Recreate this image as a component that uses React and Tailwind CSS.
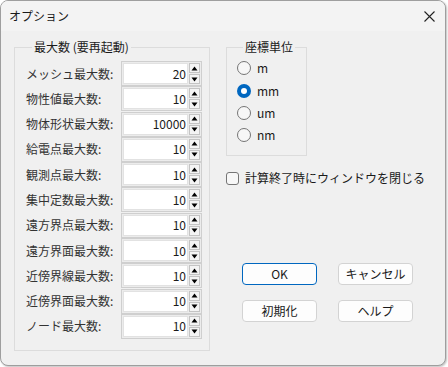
import { useState } from 'react'

const limits = [
  { label: 'メッシュ最大数:', value: '20' },
  { label: '物性値最大数:', value: '10' },
  { label: '物体形状最大数:', value: '10000' },
  { label: '給電点最大数:', value: '10' },
  { label: '観測点最大数:', value: '10' },
  { label: '集中定数最大数:', value: '10' },
  { label: '遠方界点最大数:', value: '10' },
  { label: '遠方界面最大数:', value: '10' },
  { label: '近傍界線最大数:', value: '10' },
  { label: '近傍界面最大数:', value: '10' },
  { label: 'ノード最大数:', value: '10' },
]

const units = ['m', 'mm', 'um', 'nm']

const Spin = ({ value }) => (
  <div className="flex h-[25px] w-[81px] items-stretch border border-[#cfcfcf] bg-[#ececec] p-px">
    <div className="flex flex-1 items-center justify-end border border-[#e2e2e2] bg-white pr-[1px]">
      {value}
    </div>
    <div className="ml-px flex w-[11px] flex-col gap-px">
      <div className="flex flex-1 items-center justify-center border border-[#c4c4c4] bg-[#f4f4f4]">
        <svg width="7" height="5" viewBox="0 0 7 5"><path d="M3.5 0.5 L6.5 4.5 L0.5 4.5 Z" fill="#000" /></svg>
      </div>
      <div className="flex flex-1 items-center justify-center border border-[#c4c4c4] bg-[#f4f4f4]">
        <svg width="7" height="5" viewBox="0 0 7 5"><path d="M0.5 0.5 L6.5 0.5 L3.5 4.5 Z" fill="#000" /></svg>
      </div>
    </div>
  </div>
)

const Button = ({ children, primary }) => (
  <button
    className={`h-[22px] w-[75px] rounded-[4px] border bg-[#fdfdfd] text-[12px] leading-none text-[#1a1a1a] ${primary ? 'border-[#0067c0]' : 'border-[#d3d3d3]'}`}
  >
    {children}
  </button>
)

export default function App() {
  const [unit, setUnit] = useState('mm')
  const [closeOnEnd, setCloseOnEnd] = useState(false)

  return (
    <div className="h-[367px] w-[448px] bg-white font-['Noto_Sans_CJK_JP','Noto_Sans',sans-serif] text-[12px] leading-[16px] text-[#1a1a1a]">
      <div className="h-[366px] w-[446px] overflow-hidden rounded-[8px] border border-[#9e9e9e] bg-[#f0f0f0] shadow-[1px_1px_2px_rgba(0,0,0,0.25)]">
        {/* title bar */}
        <div className="flex h-[30px] items-center justify-between bg-[#f3f3f3] pl-[8px] pr-[10px]">
          <span>オプション</span>
          <svg width="11" height="11" viewBox="0 0 11 11">
            <path d="M0.5 0.5 L10.5 10.5 M10.5 0.5 L0.5 10.5" stroke="#222" strokeWidth="1.1" />
          </svg>
        </div>

        <div className="flex pl-[13px] pt-[8px]">
          {/* limits group */}
          <fieldset className="h-[312px] w-[196px] border border-[#dcdcdc] pl-[11px] pr-[7px]">
            <legend className="ml-[6px] px-[2px]">最大数 (要再起動)</legend>
            <div className="mt-[6px] flex flex-col gap-[0.3px]">
              {limits.map((row) => (
                <div key={row.label} className="flex h-[25px] items-center">
                  <span className="w-[95px] text-[#333]">{row.label}</span>
                  <Spin value={row.value} />
                </div>
              ))}
            </div>
          </fieldset>

          <div className="ml-[16px] flex flex-col">
            {/* unit group */}
            <fieldset className="h-[117px] w-[81px] border border-[#dcdcdc] pl-[10px]">
              <legend className="ml-[6px] px-[2px]">座標単位</legend>
              <div className="mt-[2px] flex flex-col">
                {units.map((u) => (
                  <label key={u} className="flex h-[22.4px] items-center gap-[6px]" onClick={() => setUnit(u)}>
                    {unit === u ? (
                      <span className="flex h-[14px] w-[14px] items-center justify-center rounded-full bg-[#0067c0]">
                        <span className="h-[6px] w-[6px] rounded-full bg-white" />
                      </span>
                    ) : (
                      <span className="h-[14px] w-[14px] rounded-full border border-[#757575] bg-[#f7f7f7]" />
                    )}
                    <span>{u}</span>
                  </label>
                ))}
              </div>
            </fieldset>

            <label className="mt-[14px] flex items-center gap-[6px]" onClick={() => setCloseOnEnd(!closeOnEnd)}>
              <span className="h-[13px] w-[13px] rounded-[3px] border border-[#757575] bg-[#f7f7f7]" />
              <span>計算終了時にウィンドウを閉じる</span>
            </label>

            <div className="ml-[16px] mt-[77px] grid grid-cols-[75px_75px] gap-x-[21px] gap-y-[15px]">
              <Button primary>OK</Button>
              <Button>キャンセル</Button>
              <Button>初期化</Button>
              <Button>ヘルプ</Button>
            </div>
          </div>
        </div>
      </div>
    </div>
  )
}
